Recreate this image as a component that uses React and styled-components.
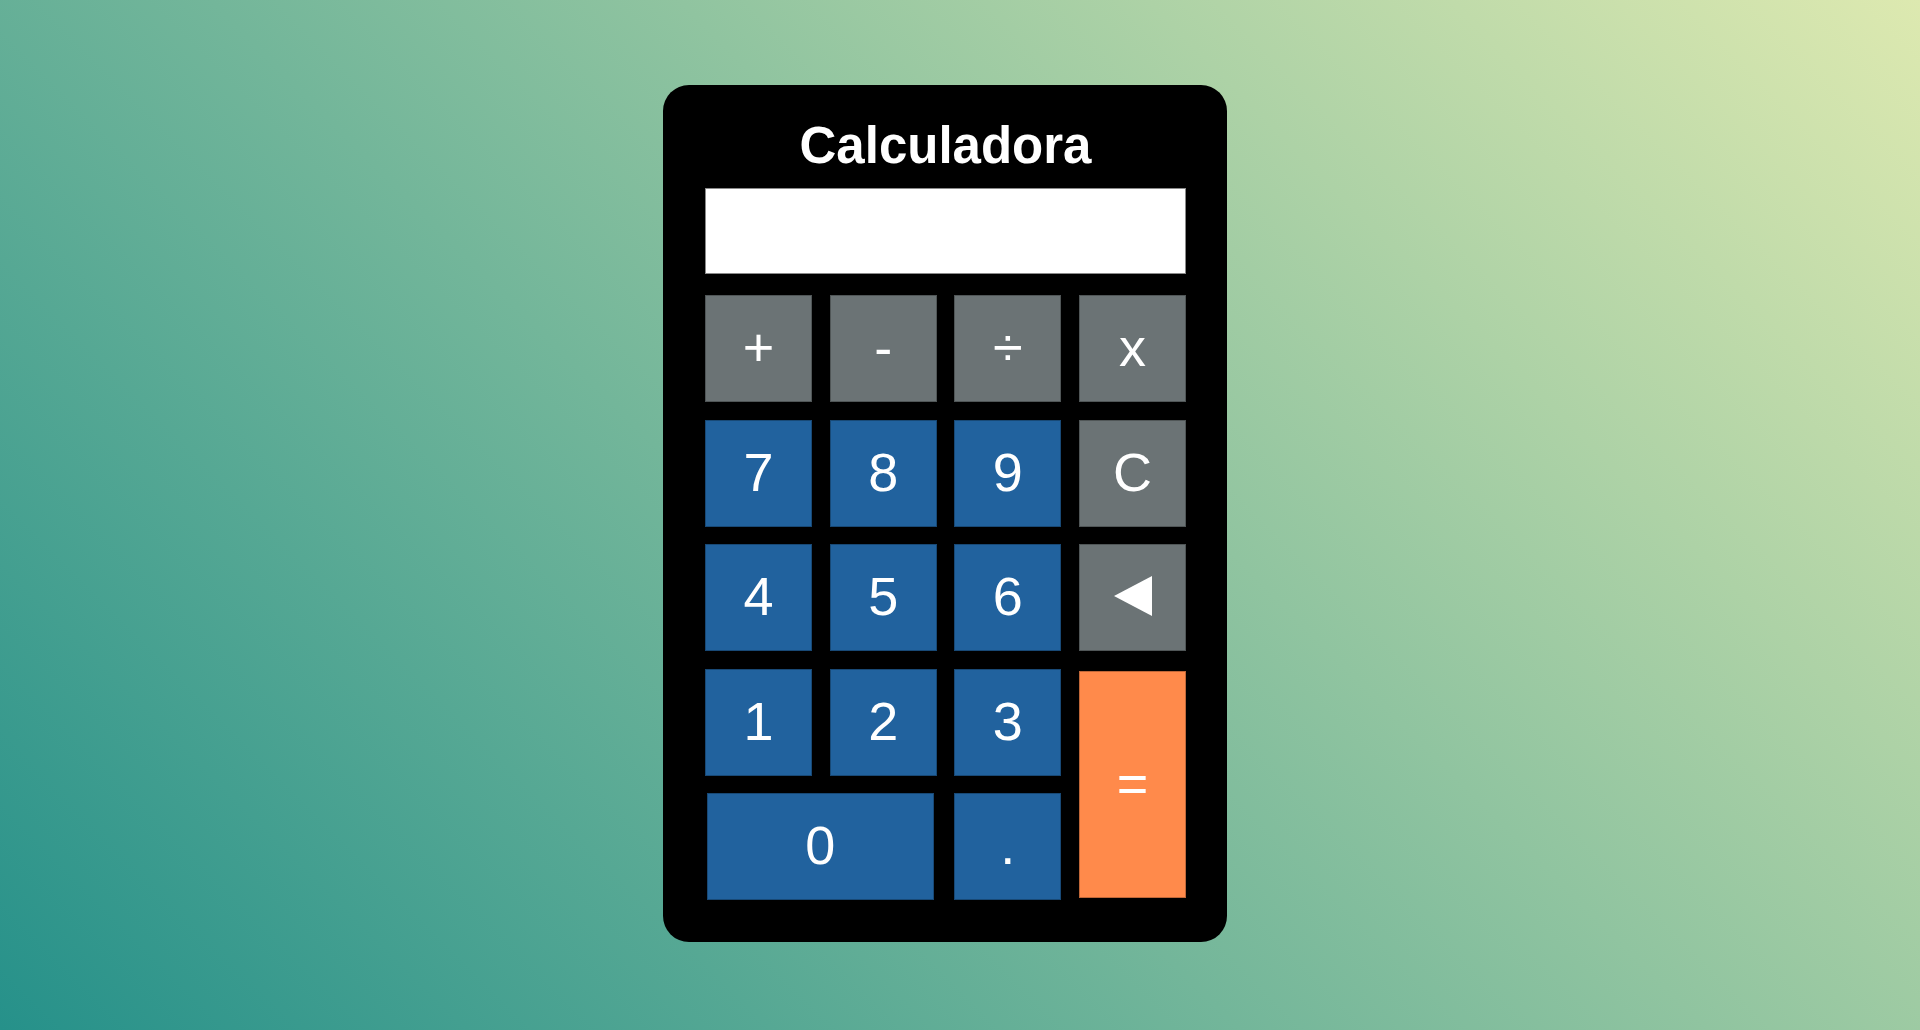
import React from 'react';
import styled, { createGlobalStyle } from 'styled-components';

const GlobalStyle = createGlobalStyle`
    html, body {
        margin: 0;
        padding: 0;
    }
    body {
        min-height: 100vh;
        background: linear-gradient(45deg, #26918a, #dde9b0);
        font-family: 'Liberation Sans', Arial, sans-serif;
    }
`;

const Page = styled.div`
    min-height: 1030px;
    display: flex;
    justify-content: center;
    align-items: flex-start;
    padding: 85px 30px 0 0;
    box-sizing: border-box;
`;

const Card = styled.div`
    width: 564px;
    box-sizing: border-box;
    background: #000;
    border-radius: 26px;
    padding: 33px 41px 42px 42px;
    display: flex;
    flex-direction: column;
`;

const Title = styled.h1`
    margin: 0 0 14px;
    color: #fff;
    font-size: 51px;
    line-height: 56px;
    font-weight: bold;
    text-align: center;
`;

const Display = styled.input`
    height: 86px;
    width: 100%;
    box-sizing: border-box;
    border: 1px solid #8a8a8a;
    background: #fff;
    margin: 0 0 21px;
    padding: 0 12px;
    font-family: 'Liberation Sans', Arial, sans-serif;
    font-size: 48px;
    text-align: right;
    outline: none;
`;

const Keys = styled.div`
    display: grid;
    grid-template-columns: repeat(4, 1fr);
    grid-template-rows: repeat(5, 107px);
    column-gap: 17.7px;
    row-gap: 17.5px;
`;

const colors = {
    op: '#6b7375',
    num: '#21629e',
    eq: '#ff8a4b',
};

const Key = styled.button`
    background: ${p => colors[p.$kind || 'num']};
    color: #fff;
    border: 1px solid rgba(0, 0, 0, 0.25);
    font-family: 'Liberation Sans', Arial, sans-serif;
    font-size: 54px;
    line-height: 1;
    display: flex;
    align-items: center;
    justify-content: center;
    padding: 0 0 3px;
    cursor: pointer;
    grid-column: ${p => (p.$wide ? 'span 2' : 'auto')};
    grid-row: ${p => (p.$tall ? 'span 2' : 'auto')};
    margin: ${p => (p.$wide ? '0 3px 0 2px' : p.$tall ? '2px 0 2px 0' : '0')};
`;

const BackIcon = () => (
    <svg width="40" height="42" viewBox="0 0 40 42">
        <polygon points="1,21 39,1 39,41" fill="#fff" />
    </svg>
);

export default function App() {
    return (
        <>
            <GlobalStyle />
            <Page>
                <Card>
                    <Title>Calculadora</Title>
                    <Display type="text" readOnly value="" />
                    <Keys>
                        <Key $kind="op">+</Key>
                        <Key $kind="op">-</Key>
                        <Key $kind="op">÷</Key>
                        <Key $kind="op">x</Key>

                        <Key>7</Key>
                        <Key>8</Key>
                        <Key>9</Key>
                        <Key $kind="op">C</Key>

                        <Key>4</Key>
                        <Key>5</Key>
                        <Key>6</Key>
                        <Key $kind="op"><BackIcon /></Key>

                        <Key>1</Key>
                        <Key>2</Key>
                        <Key>3</Key>
                        <Key $kind="eq" $tall>=</Key>

                        <Key $wide>0</Key>
                        <Key>.</Key>
                    </Keys>
                </Card>
            </Page>
        </>
    );
}
